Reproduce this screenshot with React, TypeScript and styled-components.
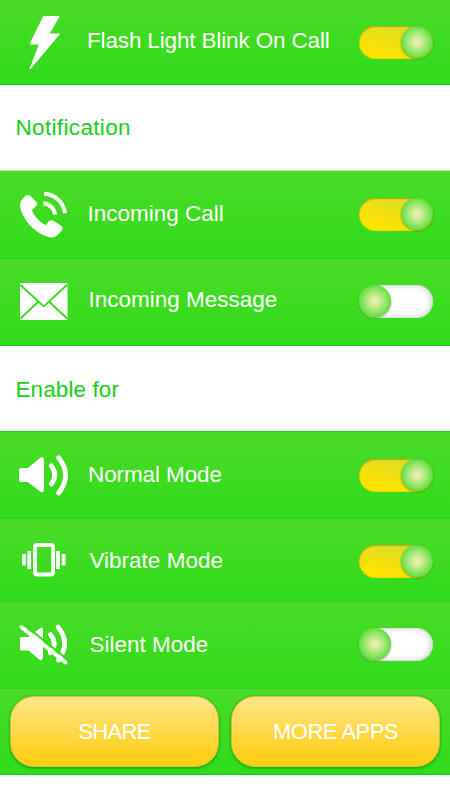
import React from "react";
import styled, { createGlobalStyle } from "styled-components";

const GlobalStyle = createGlobalStyle`
  * { box-sizing: border-box; }
  body { margin: 0; background: #fff; font-family: "Liberation Sans", Arial, sans-serif; }
`;

const Screen = styled.main`
  width: 450px;
  height: 800px;
  overflow: hidden;
  background: #fff;
  display: flex;
  flex-direction: column;
`;

const Row = styled.section<{ $height: number; $last?: boolean }>`
  flex: none;
  height: ${(p) => p.$height}px;
  display: grid;
  grid-template-columns: 87px 1fr 91px;
  align-items: start;
  background: linear-gradient(#4adb26, #30dc1b);
  border-bottom: 1px solid ${(p) => (p.$last ? "#10cb13" : "#32d21c")};
`;

const IconBox = styled.div`
  height: 100%;
  svg { display: block; }
`;

const Label = styled.div<{ $top: number; $left: number; $spacing: number }>`
  margin-top: ${(p) => p.$top}px;
  margin-left: ${(p) => p.$left}px;
  font-size: 22.5px;
  line-height: 24px;
  letter-spacing: ${(p) => p.$spacing}px;
  white-space: nowrap;
  color: #fff;
`;

const Heading = styled.header<{ $height: number; $top: number; $edge: string; $spacing: number }>`
  flex: none;
  height: ${(p) => p.$height}px;
  padding: ${(p) => p.$top}px 0 0 15.5px;
  border-bottom: 1px solid ${(p) => p.$edge};
  color: #17ce18;
  font-size: 22.5px;
  line-height: 24px;
  letter-spacing: ${(p) => p.$spacing}px;
`;

const Track = styled.button<{ $on: boolean; $top: number }>`
  display: flex;
  justify-content: ${(p) => (p.$on ? "flex-end" : "flex-start")};
  width: 74px;
  height: 33px;
  margin: ${(p) => p.$top}px 0 0;
  padding: 0;
  border: 0;
  border-radius: 17px;
  background: ${(p) =>
    p.$on ? "linear-gradient(15deg, #ffe400 20%, #d9db2b 90%)" : "#fff"};
  box-shadow: ${(p) =>
    p.$on
      ? "inset 0 1px 1px #c3a315, inset 0 0 2px #c9b51a"
      : "inset 0 0 2px #bcbcbc, inset -2px 0 7px #d2d2d2"};
`;

const Knob = styled.span`
  width: 32px;
  height: 32px;
  border-radius: 50%;
  background: radial-gradient(circle closest-side, #f4efb2 0%, #d9eda0 25%, #a0e874 60%, #74e24f 88%, #58dc36 100%);
  box-shadow: 0 1px 2px rgba(60, 100, 0, 0.6);
`;

const Actions = styled.footer`
  flex: none;
  height: 86px;
  display: flex;
  gap: 12px;
  padding: 7px 10px 0;
  background: linear-gradient(#4adb26, #30dc1b);
  border-bottom: 1px solid #10cb13;
`;

const Action = styled.button<{ $spacing: number }>`
  flex: 1;
  height: 71px;
  padding: 0;
  border: 1px solid #c9c62f;
  border-radius: 24px;
  background: linear-gradient(#ffe58a, #ffcf18 88%);
  box-shadow: 0 0 1px 0 rgba(23, 170, 20, 0.8), 0 1px 3px rgba(0, 120, 0, 0.7);
  color: #fff;
  font: 22px "Liberation Sans", Arial, sans-serif;
  letter-spacing: ${(p) => p.$spacing}px;
`;

const BoltIcon = () => (
  <svg width="80" height="84" viewBox="0 0 80 84" fill="#fff" stroke="#fff" strokeLinejoin="round">
    <path d="M43.5 16.5H59L49 34H59.5L30 69L39.5 44H30Z" />
  </svg>
);

const CallIcon = () => (
  <svg width="80" height="86" viewBox="0 0 80 86" fill="none" stroke="#fff">
    <path fill="#fff" stroke="none" d="M24.5 25.5Q28 22.5 31.5 26L36 30.5Q38 33 36 35L32 39Q33 44 39.5 50Q43 53 46 54L49 50Q52 48.5 54.5 50.5L61 54.5Q64 57 61 60.5L57 64.5Q54 67.5 49 66C36 63 22 49 20 35Q19.5 30.5 24.5 25.5Z" />
    <path d="M43.500 32.200A12.500 12.500 0 0 1 55 43.700M44.200 22.700A22 22 0 0 1 65 42.200" strokeWidth="3.900" />
  </svg>
);

const MailIcon = () => (
  <svg width="80" height="86" viewBox="0 0 80 86">
    <rect x="20" y="24" width="47.5" height="37" rx="1.5" fill="#fff" />
    <path d="M20.500 26L43.700 47.300L67 26M20.500 59.500L38 43M67 59.500L49.500 43" fill="none" stroke="#34d91c" strokeWidth="1.800" />
  </svg>
);

const SoundIcon = () => (
  <svg width="80" height="85" viewBox="0 0.5 80 85" fill="none" stroke="#fff" strokeLinecap="round" strokeLinejoin="round">
    <path fill="#fff" strokeWidth="2" d="M21 37.5H28L40.500 27.500Q43 25.500 43 29V57.500Q43 61 40.500 59L28 49.500H21Q20 49.500 20 48V39Q20 37.500 21 37.500Z" />
    <path strokeWidth="4.800" d="M51.300 34.200Q58.300 43.500 51.300 52.500M58.700 26.200Q72.500 43.500 58.700 61.500" />
  </svg>
);

const VibrateIcon = () => (
  <svg width="80" height="82" viewBox="0 0 80 82" fill="none" stroke="#fff">
    <rect x="35" y="26" width="18" height="29.500" rx="2" strokeWidth="3.800" />
    <path strokeWidth="3.800" d="M29.200 32V50M58 32V50M24 35V46.500M63.700 35V46.500" />
  </svg>
);

const MuteIcon = () => (
  <svg width="80" height="85" viewBox="0 0 80 85" fill="none" stroke="#fff" strokeLinecap="round" strokeLinejoin="round">
    <path fill="#fff" strokeWidth="2" d="M21 36H29L40.500 27Q42 25.500 42 28V54Q42 58.500 39.500 56.500L29 47.500H21Z" />
    <path strokeWidth="4.800" d="M50.500 32.500Q57.500 41 51.500 49.500L50.300 50.700M58 25Q71 41 58.500 58" />
    <path strokeWidth="2.200" stroke="#38da1e" strokeLinecap="butt" d="M24.500 23L67 57" />
    <path strokeWidth="4" d="M21.500 25L65.500 60.500" />
  </svg>
);

interface SettingProps {
  icon: React.ReactNode;
  label: string;
  height: number;
  top: number;
  left: number;
  spacing: number;
  toggleTop: number;
  on?: boolean;
  last?: boolean;
}

const Setting = ({ icon, label, height, top, left, spacing, toggleTop, on = false, last }: SettingProps) => (
  <Row $height={height} $last={last}>
    <IconBox>{icon}</IconBox>
    <Label $top={top} $left={left} $spacing={spacing}>{label}</Label>
    <Track type="button" role="switch" aria-checked={on} aria-label={label} $on={on} $top={toggleTop}>
      <Knob />
    </Track>
  </Row>
);

export default function App() {
  return (
    <>
      <GlobalStyle />
      <Screen>
        <Setting icon={<BoltIcon />} label="Flash Light Blink On Call" height={85} top={29} left={0} spacing={-0.15} toggleTop={26} on last />
        <Heading $height={86} $top={31} $edge="#b5edb0" $spacing={0.34}>Notification</Heading>
        <Setting icon={<CallIcon />} label="Incoming Call" height={88} top={31} left={0.5} spacing={0} toggleTop={27} on />
        <Setting icon={<MailIcon />} label="Incoming Message" height={87} top={29} left={1.5} spacing={0} toggleTop={26} last />
        <Heading $height={86} $top={32} $edge="#20cf1b" $spacing={0.1}>Enable for</Heading>
        <Setting icon={<SoundIcon />} label="Normal Mode" height={87} top={31} left={1} spacing={-0.1} toggleTop={27} on />
        <Setting icon={<VibrateIcon />} label="Vibrate Mode" height={83} top={30} left={2.5} spacing={0} toggleTop={26} on />
        <Setting icon={<MuteIcon />} label="Silent Mode" height={87} top={31} left={2.5} spacing={0} toggleTop={26} />
        <Actions>
          <Action type="button" $spacing={-0.7}>SHARE</Action>
          <Action type="button" $spacing={-0.5}>MORE APPS</Action>
        </Actions>
      </Screen>
    </>
  );
}
